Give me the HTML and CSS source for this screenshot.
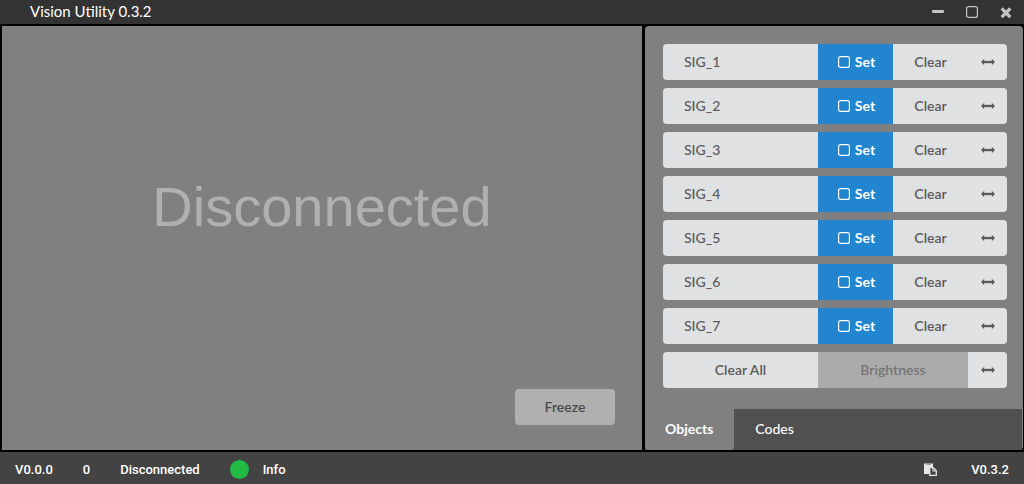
FILE: index.html
```html
<!DOCTYPE html>
<html lang="en">
<head>
    <meta charset="UTF-8">
    <meta name="viewport" content="width=device-width, initial-scale=1.0">
    <title>Vision Utility</title>
    <link rel="stylesheet" href="styles.css">
</head>
<body>
    <svg class="defs" aria-hidden="true">
        <symbol id="icon-square" viewBox="0 0 12 12">
            <rect x="0.6" y="0.6" width="10.8" height="10.8" rx="2" fill="none" stroke="currentColor" stroke-width="1.2"/>
        </symbol>
        <symbol id="icon-arrows" viewBox="0 0 14 6">
            <path d="M0.2 3 3 0.2V2h8V0.2L13.8 3 11 5.8V4H3v1.8z" fill="currentColor" stroke="currentColor" stroke-width="0.3"/>
        </symbol>
    </svg>

    <header class="titlebar">
        <span class="title">Vision Utility 0.3.2</span>
        <div class="window-controls">
            <button type="button" aria-label="Minimize">
                <svg width="12" height="12" viewBox="0 0 12 12"><rect y="4" width="12" height="3" rx="1" fill="currentColor"/></svg>
            </button>
            <button type="button" aria-label="Maximize">
                <svg width="12" height="12"><use href="#icon-square"/></svg>
            </button>
            <button type="button" aria-label="Close">
                <svg width="12" height="12" viewBox="0 0 12 12"><path d="M2.8 3.6 9.2 10M9.2 3.6 2.8 10" stroke="currentColor" stroke-width="3.2" stroke-linecap="square"/></svg>
            </button>
        </div>
    </header>

    <main class="workspace">
        <section class="view">
            <div class="message">Disconnected</div>
            <button type="button" class="button freeze" disabled>Freeze</button>
        </section>

        <section class="side">
            <div class="objects" id="objects">
                <div class="row all">
                    <button type="button" class="button name">Clear All</button>
                    <button type="button" class="button brightness" disabled>Brightness</button>
                    <button type="button" class="button range" aria-label="Brightness range"><svg width="14" height="6"><use href="#icon-arrows"/></svg></button>
                </div>
            </div>
            <nav class="tabs">
                <a href="#objects" class="tab active">Objects</a>
                <a href="#codes" class="tab">Codes</a>
            </nav>
        </section>
    </main>

    <footer class="statusbar">
        <span class="firmware">V0.0.0</span>
        <span class="count">0</span>
        <span class="state">Disconnected</span>
        <span class="light"></span>
        <span>Info</span>
        <button type="button" class="copy" aria-label="Copy">
            <svg width="13" height="13" viewBox="0 0 13 13">
                <path d="M0 0.5h9V4H5v7H0z" fill="currentColor"/>
                <path d="M2 1.5h5" stroke="#8a8a8a" stroke-width="0.8"/>
                <path d="M5.7 4.7h3.6L12.3 7.7V12.3H5.7z" fill="#434343" stroke="currentColor" stroke-width="1.3"/>
                <path d="M9 5v3h3" fill="none" stroke="currentColor" stroke-width="1.1"/>
            </svg>
        </button>
        <span>V0.3.2</span>
    </footer>

    <script>
        const objects = document.getElementById('objects');
        const lastRow = objects.querySelector('.all');

        // One row per color signature
        for (let i = 1; i <= 7; i++) {
            const row = document.createElement('div');
            row.className = 'row';
            row.innerHTML = `
                <input class="name" type="text" value="SIG_${i}" aria-label="Signature ${i} name">
                <button type="button" class="button set"><svg width="12" height="12"><use href="#icon-square"/></svg>Set</button>
                <button type="button" class="button clear">Clear</button>
                <button type="button" class="button range" aria-label="Signature ${i} range"><svg width="14" height="6"><use href="#icon-arrows"/></svg></button>`;
            objects.insertBefore(row, lastRow);
        }
    </script>
</body>
</html>
```
FILE: styles.css
```css
* {
    box-sizing: border-box;
}
body {
    margin: 0;
    min-height: 100vh;
    display: flex;
    flex-direction: column;
    background: #000;
    color: #fff;
    font-family: Lato, sans-serif;
    font-size: 14px;
}
button, input {
    font: inherit;
    margin: 0;
    padding: 0;
    border: none;
    border-radius: 0;
    background: none;
}
.defs {
    display: none;
}
.titlebar {
    height: 24px;
    padding: 0 12px 0 30px;
    display: flex;
    align-items: center;
    justify-content: space-between;
    background: #333;
    font-size: 15px;
}
.title {
    padding-bottom: 2px;
}
.window-controls {
    display: flex;
    gap: 22px;
}
.window-controls button {
    display: flex;
    color: #c4c4c4;
}
.workspace {
    flex: 1;
    display: flex;
    gap: 3px;
    padding: 2px 1px 2px 2px;
}
.view {
    flex: 1;
    display: flex;
    flex-direction: column;
    background: #808080;
}
.message {
    flex: 1;
    padding-bottom: 2px;
    display: flex;
    align-items: center;
    justify-content: center;
    color: #b0b0b0;
    font-family: "Liberation Sans", Arial, sans-serif;
    font-size: 56px;
    line-height: 64px;
}
.button {
    height: 36px;
    padding-bottom: 2px;
    display: flex;
    align-items: center;
    justify-content: center;
    background: #e0e1e2;
    color: #5a5a5a;
    font-weight: 600;
}
.freeze {
    width: 100px;
    margin: 0 27px 25px 0;
    align-self: flex-end;
    border-radius: 4px;
    background: #b0b0b0;
    color: #4a4a4a;
}
.side {
    width: 378px;
    display: flex;
    flex-direction: column;
    border-radius: 4px;
    background: #808080;
}
.objects {
    flex: 1;
    display: flex;
    flex-direction: column;
    gap: 8px;
    padding: 18px 16px 21px 18px;
}
.row {
    display: flex;
    border-radius: 4px;
    overflow: hidden;
}
.name {
    flex: 1;
    min-width: 0;
    height: 36px;
}
input.name {
    padding: 0 21px 2px;
    background: #e0e1e2;
    color: #5a5a5a;
    font-weight: 500;
}
.set {
    width: 75px;
    padding-left: 2px;
    gap: 5px;
    background: #2185d0;
    color: #fff;
    font-weight: 700;
}
.set svg {
    margin-top: 1px;
}
.clear {
    width: 75px;
}
.range {
    width: 39px;
    padding: 0;
}
.brightness {
    width: 150px;
    background: #ababab;
    color: #757575;
}
.tabs {
    height: 41px;
    margin-right: 1px;
    display: flex;
    background: #505050;
}
.tab {
    padding: 0 21px 2px;
    display: flex;
    align-items: center;
    color: #fff;
    text-decoration: none;
    font-weight: 500;
}
.tab.active {
    padding-left: 20px;
    border-radius: 0 0 4px 4px;
    background: #808080;
    font-weight: 700;
}
.statusbar {
    height: 32px;
    padding: 2px 15px 0;
    display: flex;
    align-items: center;
    background: #434343;
    font-family: Roboto, Arial, sans-serif;
    font-size: 13px;
    font-weight: 500;
}
.count {
    margin: 0 30px;
}
.light {
    width: 19px;
    height: 19px;
    margin: 0 14px 0 30px;
    border-radius: 50%;
    background: #21ba45;
}
.copy {
    margin: 0 34px 0 auto;
    display: flex;
    color: #e6e6e6;
}
```
